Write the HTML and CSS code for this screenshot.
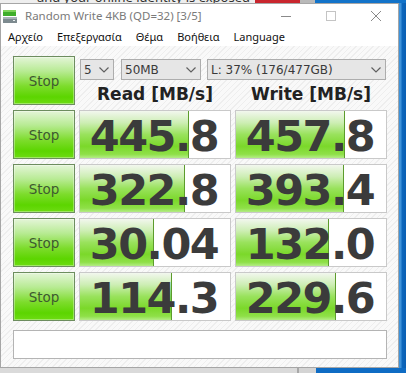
FILE: index.html
```html
<!DOCTYPE html>
<html lang="el">
<head>
<meta charset="UTF-8">
<meta name="viewport" content="width=device-width, initial-scale=1.0">
<title>CrystalDiskMark</title>
<link rel="stylesheet" href="styles.css">
</head>
<body>
    <div class="desk-top">
        <div class="page-strip"><span class="page-text">and your online identity is exposed</span></div>
        <div class="red-tab"></div>
        <div class="grey-tab"></div>
    </div>
    <div class="desk-mid">
        <div class="window">
            <div class="titlebar">
                <svg class="app-icon" width="14" height="16" viewBox="0 0 14 16">
                    <rect x="0" y="2" width="13" height="6" fill="#3fae2a"/>
                    <rect x="0" y="2" width="13" height="2" fill="#7fd35a"/>
                    <rect x="0" y="9" width="14" height="6" fill="#7d8a8f"/>
                    <rect x="0" y="9" width="14" height="2" fill="#a9b3b7"/>
                    <rect x="10" y="12" width="2" height="1" fill="#e8f0f0"/>
                </svg>
                <span class="title-text">Random Write 4KB (QD=32) [3/5]</span>
                <div class="caption-btns">
                    <div class="cap-btn">
                        <svg width="10" height="10" viewBox="0 0 10 10"><line x1="0" y1="5.5" x2="10" y2="5.5" stroke="#8a8a8a" stroke-width="1"/></svg>
                    </div>
                    <div class="cap-btn">
                        <svg width="10" height="10" viewBox="0 0 10 10"><rect x="0.5" y="0.5" width="9" height="9" fill="none" stroke="#c4c4c4" stroke-width="1"/></svg>
                    </div>
                    <div class="cap-btn">
                        <svg width="10" height="10" viewBox="0 0 10 10"><path d="M0 0 L10 10 M10 0 L0 10" stroke="#8a8a8a" stroke-width="1"/></svg>
                    </div>
                </div>
            </div>
            <div class="menubar">
                <span class="menu-item">Αρχείο</span>
                <span class="menu-item">Επεξεργασία</span>
                <span class="menu-item">Θέμα</span>
                <span class="menu-item">Βοήθεια</span>
                <span class="menu-item">Language</span>
            </div>
            <div class="client">
                <div class="bench">
                    <div class="stop-btn">Stop</div>
                    <div class="top-cell">
                        <div class="combo-row">
                            <div class="combo combo-count"><span>5</span><svg class="chev" width="10" height="6" viewBox="0 0 10 6"><path d="M0.5 0.5 L5 5 L9.5 0.5" fill="none" stroke="#606060" stroke-width="1.2"/></svg></div>
                            <div class="combo combo-size"><span>50MB</span><svg class="chev" width="10" height="6" viewBox="0 0 10 6"><path d="M0.5 0.5 L5 5 L9.5 0.5" fill="none" stroke="#606060" stroke-width="1.2"/></svg></div>
                            <div class="combo combo-drive"><span>L: 37% (176/477GB)</span><svg class="chev" width="10" height="6" viewBox="0 0 10 6"><path d="M0.5 0.5 L5 5 L9.5 0.5" fill="none" stroke="#606060" stroke-width="1.2"/></svg></div>
                        </div>
                        <div class="head-row">
                            <div class="col-head">Read [MB/s]</div>
                            <div class="col-head">Write [MB/s]</div>
                        </div>
                    </div>

                    <div class="stop-btn">Stop</div>
                    <div class="result"><span class="bar" style="width: 108px"></span><span class="value">445.8</span></div>
                    <div class="result"><span class="bar" style="width: 108px"></span><span class="value">457.8</span></div>

                    <div class="stop-btn">Stop</div>
                    <div class="result"><span class="bar" style="width: 104px"></span><span class="value">322.8</span></div>
                    <div class="result"><span class="bar" style="width: 107px"></span><span class="value">393.4</span></div>

                    <div class="stop-btn">Stop</div>
                    <div class="result"><span class="bar" style="width: 73px"></span><span class="value">30.04</span></div>
                    <div class="result"><span class="bar" style="width: 92px"></span><span class="value">132.0</span></div>

                    <div class="stop-btn">Stop</div>
                    <div class="result"><span class="bar" style="width: 91px"></span><span class="value">114.3</span></div>
                    <div class="result"><span class="bar" style="width: 99px"></span><span class="value">229.6</span></div>
                </div>
                <div class="comment"></div>
            </div>
        </div>
        <div class="desk-edge"></div>
    </div>
    <div class="desk-bottom">
        <div class="task-grey"></div>
    </div>
</body>
</html>
```

FILE: styles.css
```css
body {
    margin: 0;
    width: 406px;
    height: 373px;
    overflow: hidden;
    background: #0f6cc4;
    font-family: "Noto Sans", "DejaVu Sans", sans-serif;
}

/* desktop bits around the window */
.desk-top {
    display: flex;
    height: 3px;
    background: #1273c9;
}
.page-strip {
    width: 255px;
    background: #eeeeee;
    overflow: hidden;
    display: flex;
    align-items: flex-end;
    justify-content: flex-end;
    padding-right: 5px;
    box-sizing: border-box;
}
.page-text {
    font-size: 13px;
    line-height: 13px;
    margin-bottom: -1px;
    color: #333;
    white-space: nowrap;
}
.red-tab {
    width: 45px;
    background: #c9262e;
}
.grey-tab {
    width: 15px;
    background: #b9b9b9;
}
.desk-mid {
    display: flex;
}
.desk-edge {
    flex: 1;
    background: linear-gradient(90deg, #3f93da 0, #3f93da 2px, #0d67bd 3px, #0a5fb3 100%);
}
.desk-bottom {
    height: 5px;
    display: flex;
}
.task-grey {
    width: 316px;
    background: linear-gradient(90deg, #dadada 0, #dadada 297px, #a8a8a8 297px, #a8a8a8 299px, #d4d4d4 299px);
}

/* window */
.window {
    width: 399px;
    height: 365px;
    box-sizing: border-box;
    border: 1px solid #a6a6a6;
    background: #fff;
    display: flex;
    flex-direction: column;
}
.titlebar {
    height: 23px;
    display: flex;
    align-items: center;
    background: #fff;
}
.app-icon {
    margin-left: 2px;
    margin-right: 8px;
}
.title-text {
    font-size: 11.5px;
    color: #7a7a7a;
    flex: 1;
}
.caption-btns {
    display: flex;
    height: 23px;
}
.cap-btn {
    width: 45px;
    display: flex;
    align-items: center;
    justify-content: center;
}
.menubar {
    height: 19px;
    display: flex;
    align-items: center;
    background: #fff;
    font-size: 11px;
    color: #111;
}
.menu-item {
    padding: 0 7px;
}

.client {
    flex: 1;
    padding: 10px 0 8px 12px;
    background-color: #f7f7f7;
    background-image: repeating-linear-gradient(135deg, #f9f9f9 0, #f9f9f9 3px, #eeeeee 3px, #eeeeee 4px);
}
.bench {
    display: grid;
    grid-template-columns: 62px 152px 152px;
    grid-auto-rows: 49px;
    column-gap: 4px;
    row-gap: 5px;
}

.stop-btn {
    box-sizing: border-box;
    border: 1px solid #6d8d5f;
    background: linear-gradient(180deg, #e4f5d8 0%, #b8eb94 30%, #7ddc2c 62%, #5cd500 85%, #6ddc12 100%);
    box-shadow: inset 0 0 0 1px rgba(255, 255, 255, 0.35);
    display: flex;
    align-items: center;
    justify-content: center;
    font-family: "DejaVu Sans", sans-serif;
    font-size: 13.5px;
    color: #3e5a30;
}

.top-cell {
    grid-column: 2 / 4;
    display: flex;
    flex-direction: column;
}
.combo-row {
    display: flex;
    margin-top: 3px;
    margin-left: 1px;
    height: 21px;
}
.combo {
    box-sizing: border-box;
    height: 21px;
    border: 1px solid #adadad;
    background: #e6e6e6;
    display: flex;
    align-items: center;
    justify-content: space-between;
    padding: 0 4px 0 3px;
    font-family: "DejaVu Sans", sans-serif;
    font-size: 12px;
    color: #3a3a3a;
}
.combo-count {
    width: 34px;
}
.combo-size {
    width: 80px;
    margin-left: 7px;
}
.combo-drive {
    width: 179px;
    margin-left: 6px;
}
.head-row {
    display: grid;
    grid-template-columns: 152px 152px;
    column-gap: 4px;
    flex: 1;
    align-items: center;
}
.col-head {
    text-align: center;
    font-family: "DejaVu Sans", sans-serif;
    font-weight: bold;
    font-size: 17px;
    color: #222;
    padding-top: 2px;
}

.result {
    position: relative;
    box-sizing: border-box;
    border: 1px solid #c9c9c9;
    background: #fff;
    display: flex;
    align-items: center;
    justify-content: center;
}
.bar {
    position: absolute;
    left: 0;
    top: 0;
    bottom: 0;
    border-right: 1px solid #5c9c2c;
    background: linear-gradient(180deg, #f2f7ee 0%, #cdeeb4 25%, #99e25c 50%, #7bd82a 75%, #8fe048 92%, #b4ec86 100%);
}
.value {
    position: relative;
    font-family: "DejaVu Sans", sans-serif;
    font-weight: bold;
    font-size: 43px;
    letter-spacing: -1.5px;
    line-height: 47px;
    padding: 4px 2px 0 0;
    color: #3b3b3b;
}

.comment {
    box-sizing: border-box;
    width: 374px;
    height: 29px;
    margin-top: 9px;
    border: 1px solid #b4b4b4;
    background: #fff;
}
```
